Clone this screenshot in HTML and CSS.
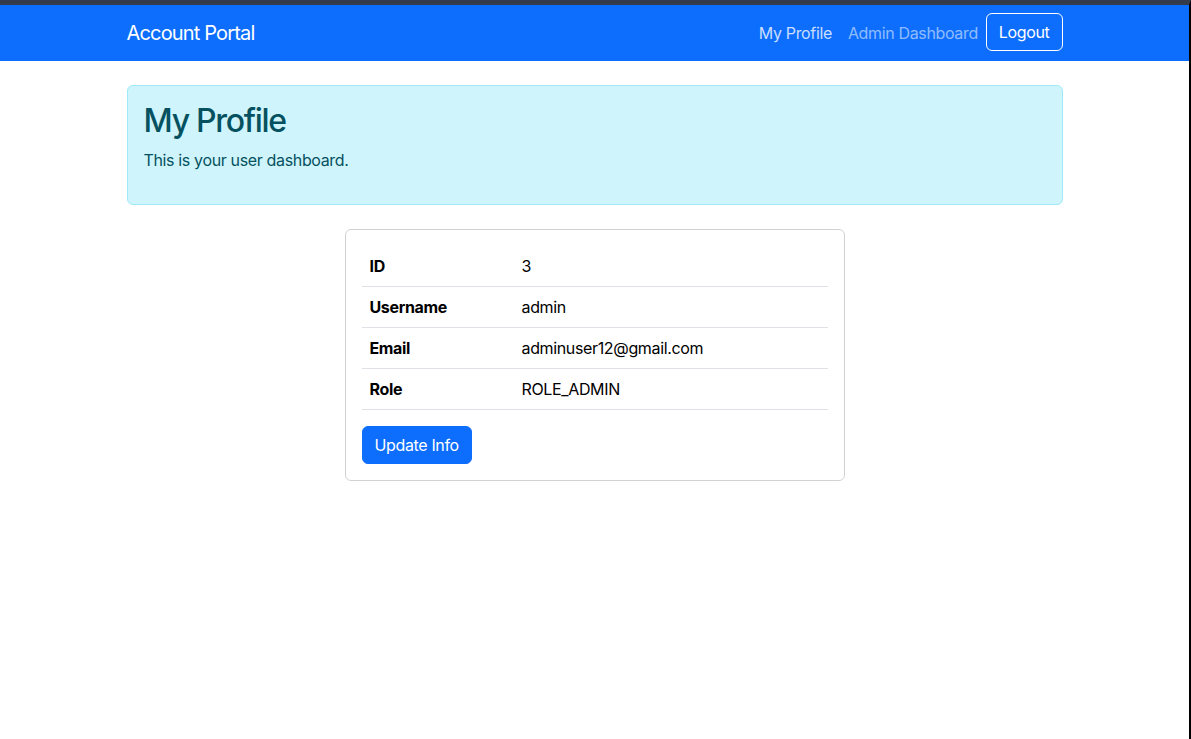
FILE: index.html
```html
<!DOCTYPE html>
<html lang="en">
<head>
<meta charset="utf-8">
<title>Account Portal</title>
<link rel="stylesheet" href="styles.css">
</head>
<body>
<div class="frame">
  <nav class="navbar">
    <div class="container nav-inner">
      <a class="brand" href="#">Account Portal</a>
      <div class="nav-links">
        <a class="nav-link active" href="#">My Profile</a>
        <a class="nav-link" href="#">Admin Dashboard</a>
        <button class="btn-logout" type="button">Logout</button>
      </div>
    </div>
  </nav>
  <main class="container">
    <div class="alert-info">
      <h1 class="alert-title">My Profile</h1>
      <p class="alert-text">This is your user dashboard.</p>
    </div>
    <div class="card">
      <table class="info-table">
        <tbody>
          <tr><th>ID</th><td>3</td></tr>
          <tr><th>Username</th><td>admin</td></tr>
          <tr><th>Email</th><td>adminuser12@gmail.com</td></tr>
          <tr><th>Role</th><td>ROLE_ADMIN</td></tr>
        </tbody>
      </table>
      <button class="btn-primary" type="button">Update Info</button>
    </div>
  </main>
</div>
</body>
</html>
```

FILE: styles.css
```css
* { box-sizing: border-box; }
html, body { margin: 0; padding: 0; }
body {
  font-family: Inter, "Noto Sans", "Liberation Sans", sans-serif;
  font-size: 16px;
  line-height: 1.5;
  letter-spacing: -0.022em;
  color: #212529;
  background: #fff;
}
.frame {
  min-height: 100vh;
  border-top: 5px solid #343b4b;
  border-right: 2px solid #000;
}
.container {
  max-width: 960px;
  margin: 0 auto;
  padding: 0 12px;
}
.navbar {
  background: #0d6efd;
  height: 56px;
}
.nav-inner {
  height: 100%;
  display: flex;
  align-items: center;
  justify-content: space-between;
}
.brand {
  color: #fff;
  font-size: 20px;
  letter-spacing: -0.042em;
  text-decoration: none;
  line-height: 1.5;
}
.nav-links {
  display: flex;
  align-items: center;
}
.nav-link {
  color: rgba(255,255,255,.55);
  text-decoration: none;
  padding: 8px 8px;
}
.nav-link.active { color: rgba(255,255,255,.78); }
.btn-logout {
  font: inherit;
  letter-spacing: inherit;
  color: #fff;
  background: transparent;
  border: 1px solid #fff;
  border-radius: 6px;
  padding: 6px 12px;
  line-height: 1.5;
  height: 38px;
  margin-top: -2px;
}
.alert-info {
  margin-top: 24px;
  background: #cff4fc;
  border: 1px solid #9eeaf9;
  color: #055160;
  border-radius: 6px;
  padding: 16px;
}
.alert-title {
  margin: 0 0 8px;
  font-size: 32px;
  font-weight: 500;
  letter-spacing: -0.04em;
  line-height: 1.2;
}
.alert-text { margin: 0 0 16px; }
.card {
  width: 500px;
  margin: 24px auto 0;
  border: 1px solid #d0d3d6;
  border-radius: 6px;
  padding: 16px;
}
.info-table {
  width: 100%;
  border-collapse: collapse;
  margin-bottom: 16px;
}
.info-table th, .info-table td {
  text-align: left;
  padding: 8px;
  border-bottom: 1px solid #dee2e6;
  color: #000;
  line-height: 24px;
}
.info-table th { width: 152px; font-weight: 700; }
.info-table td { font-weight: 400; }
.btn-primary {
  font: inherit;
  letter-spacing: inherit;
  color: #fff;
  background: #0d6efd;
  border: 1px solid #0d6efd;
  border-radius: 6px;
  padding: 6px 12px;
  line-height: 1.5;
  height: 38px;
}
```
